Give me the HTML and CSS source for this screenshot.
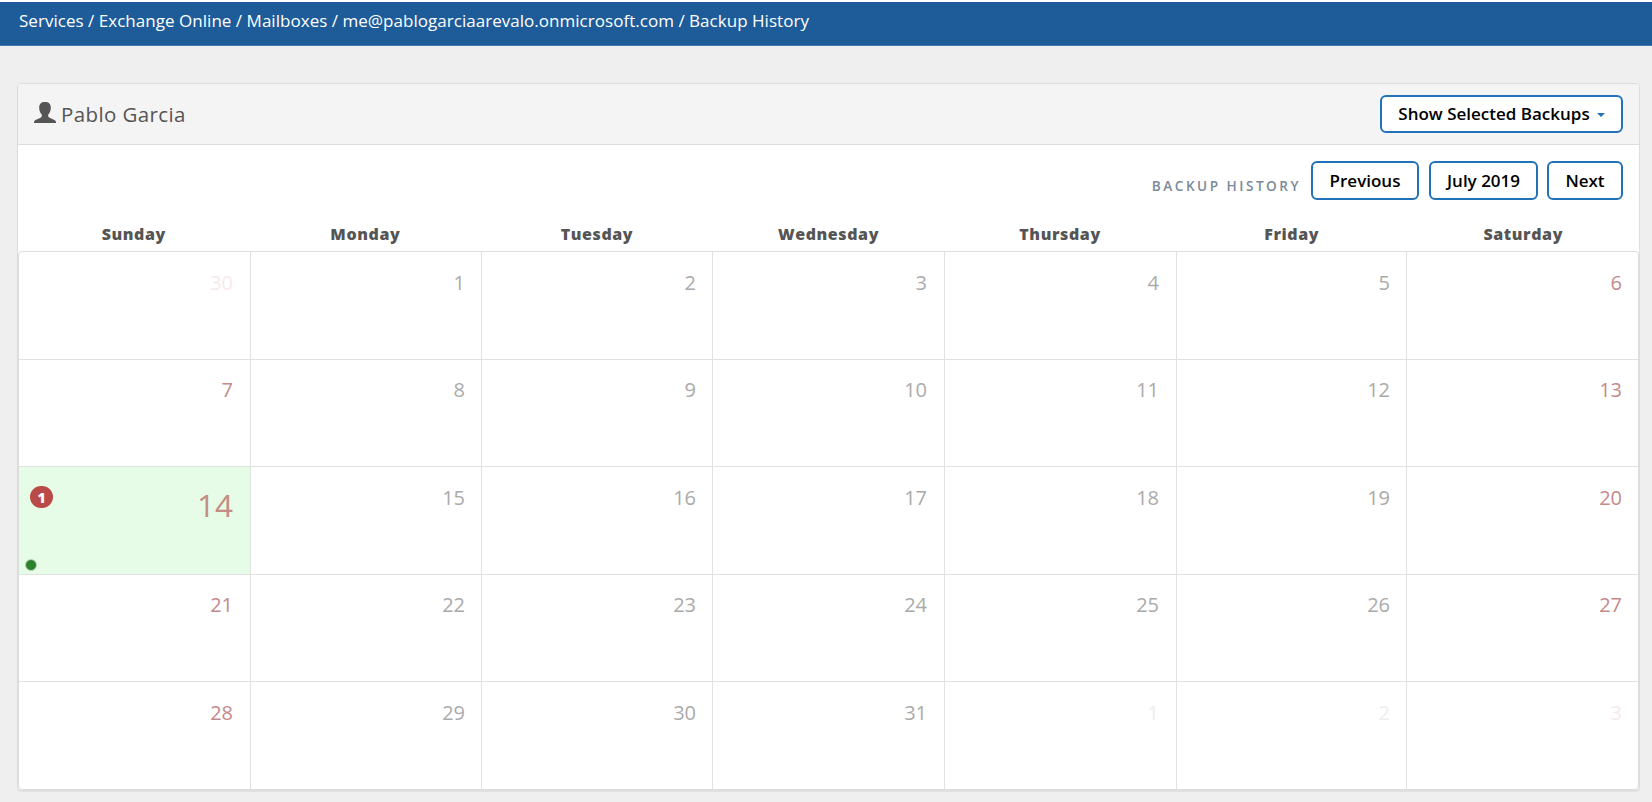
FILE: index.html
```
<!DOCTYPE html>
<html lang="en">
<head>
<meta charset="utf-8">
<title>Backup History</title>
<link rel="stylesheet" href="styles.css">
</head>
<body>
<nav class="breadcrumb">Services / Exchange Online / Mailboxes / me@pablogarciaarevalo.onmicrosoft.com / Backup History</nav>
<main class="panel">
  <header class="panel-header">
    <h1 class="user"><svg class="user-icon" width="22" height="22" viewBox="0 0 22 22"><path d="M11 0C7.200 0 5.200 2 5.200 5.500C5.200 8.500 6.100 11 7.800 12.600V14.500L6.500 15.800L1.500 17.900Q0 18.600 0 20V21H22V20Q22 18.600 20.500 17.900L15.500 15.800L14.200 14.500V12.600C15.900 11 16.800 8.500 16.800 5.500C16.800 2 14.800 0 11 0Z"/></svg>Pablo Garcia</h1>
    <button class="btn btn-menu">Show Selected Backups<span class="caret"></span></button>
  </header>
  <div class="toolbar">
    <span class="toolbar-label">BACKUP HISTORY</span>
    <button class="btn btn-prev">Previous</button>
    <button class="btn btn-month">July 2019</button>
    <button class="btn btn-next">Next</button>
  </div>
  <div class="weekdays"><span>Sunday</span><span>Monday</span><span>Tuesday</span><span>Wednesday</span><span>Thursday</span><span>Friday</span><span>Saturday</span></div>
  <div class="calendar">
    <div class="week"><div class="day weekend outside">30</div><div class="day">1</div><div class="day">2</div><div class="day">3</div><div class="day">4</div><div class="day">5</div><div class="day weekend">6</div></div>
    <div class="week"><div class="day weekend">7</div><div class="day">8</div><div class="day">9</div><div class="day">10</div><div class="day">11</div><div class="day">12</div><div class="day weekend">13</div></div>
    <div class="week"><div class="day weekend today"><span class="badge">1</span><span class="today-number">14</span><span class="event"></span></div><div class="day">15</div><div class="day">16</div><div class="day">17</div><div class="day">18</div><div class="day">19</div><div class="day weekend">20</div></div>
    <div class="week"><div class="day weekend">21</div><div class="day">22</div><div class="day">23</div><div class="day">24</div><div class="day">25</div><div class="day">26</div><div class="day weekend">27</div></div>
    <div class="week"><div class="day weekend">28</div><div class="day">29</div><div class="day">30</div><div class="day">31</div><div class="day outside">1</div><div class="day outside">2</div><div class="day weekend outside">3</div></div>
  </div>
</main>
</body>
</html>
```
FILE: styles.css
```
* { box-sizing: border-box; }
body {
  margin: 0;
  padding-top: 2px;
  height: 802px;
  overflow: hidden;
  background: linear-gradient(#fff 2px, #efefef 2px);
  font-family: "Open Sans", sans-serif;
  color: #555;
}
.breadcrumb {
  height: 44px;
  padding-left: 19px;
  background: #1d5c99;
  border-bottom: 1px solid #3d78b0;
  color: #fff;
  font-size: 17px;
  letter-spacing: .03px;
  line-height: 37px;
  white-space: nowrap;
}
.panel {
  width: 1623px;
  height: 708px;
  margin: 37px 0 0 17px;
  background: #fff;
  border: 1px solid #ddd;
  border-radius: 4px;
  box-shadow: 0 1px 1px rgba(0, 0, 0, .06);
}
.panel-header {
  height: 61px;
  padding: 0 16px 0 16px;
  display: flex;
  justify-content: space-between;
  align-items: center;
  background: #f4f4f4;
  border-bottom: 1px solid #ddd;
  border-radius: 3px 3px 0 0;
}
.user {
  display: flex;
  align-items: center;
  gap: 5px;
  margin: 0;
  font-size: 20.500px;
  font-weight: 400;
  letter-spacing: .38px;
  line-height: 28px;
}
.user-icon { fill: #555; margin-top: -2px; }
.btn {
  height: 39px;
  padding: 0;
  background: #fff;
  border: 2px solid #2272b9;
  border-radius: 6px;
  color: #000;
  font: 600 17px/33px "Open Sans", sans-serif;
  white-space: nowrap;
}
.btn-menu {
  width: 243px;
  height: 38px;
  margin-top: -1px;
  display: flex;
  justify-content: center;
  align-items: center;
  gap: 7px;
}
.caret {
  margin-top: 3px;
  border: 4px solid transparent;
  border-top-color: #2272b9;
  border-bottom: 0;
}
.toolbar {
  height: 81px;
  padding: 16px 16px 0 0;
  display: flex;
  justify-content: flex-end;
}
.toolbar-label {
  margin: 15px 10px 0 0;
  color: #7b8a99;
  font-size: 13.600px;
  font-weight: 600;
  letter-spacing: 2.500px;
  line-height: 20px;
}
.btn-prev { width: 108px; margin-right: 10px; }
.btn-month { width: 109px; margin-right: 9px; }
.btn-next { width: 76px; }
.weekdays {
  height: 25px;
  display: grid;
  grid-template-columns: repeat(7, 1fr);
  text-align: center;
  font-size: 16px;
  font-weight: 800;
  letter-spacing: .6px;
  line-height: 16px;
}
.calendar {
  height: 539px;
  display: grid;
  grid-template-rows: 107px 107px 108px 107px 108px;
  border: 1px solid #ddd;
  border-radius: 4px;
}
.week { display: grid; grid-template-columns: 231px 231px 231px 232px 232px 230px 1fr; }
.week + .week { border-top: 1px solid #e1e1e1; }
.day {
  padding: 17px 16px 0 0;
  text-align: right;
  font-size: 20px;
  line-height: 28px;
  color: #aaa;
}
.week:nth-child(even) .day { padding-top: 16px; }
.day + .day { border-left: 1px solid #e1e1e1; }
.day.weekend { color: #c48989; }
.day.outside { color: #eee; }
.day.weekend.outside { color: #f6e9e9; }
.day:first-child, .day:nth-child(4), .day:nth-child(5) { padding-right: 17px; }
.today { position: relative; background: #e6fce6; }
.today-number {
  display: block;
  margin-top: 1px;
  font-size: 31.500px;
  font-weight: 400;
  line-height: 40px;
  color: #c48d84;
}
.badge {
  position: absolute;
  left: 11px;
  top: 19px;
  width: 23px;
  height: 22px;
  border-radius: 11px;
  background: #b94a48;
  color: #fff;
  text-align: center;
  font-size: 14px;
  font-weight: 800;
  line-height: 24px;
}
.event {
  position: absolute;
  left: 6px;
  bottom: 3px;
  width: 12px;
  height: 12px;
  border: 1px solid #b6d7b6;
  border-radius: 50%;
  background: #2d812d;
}
```
